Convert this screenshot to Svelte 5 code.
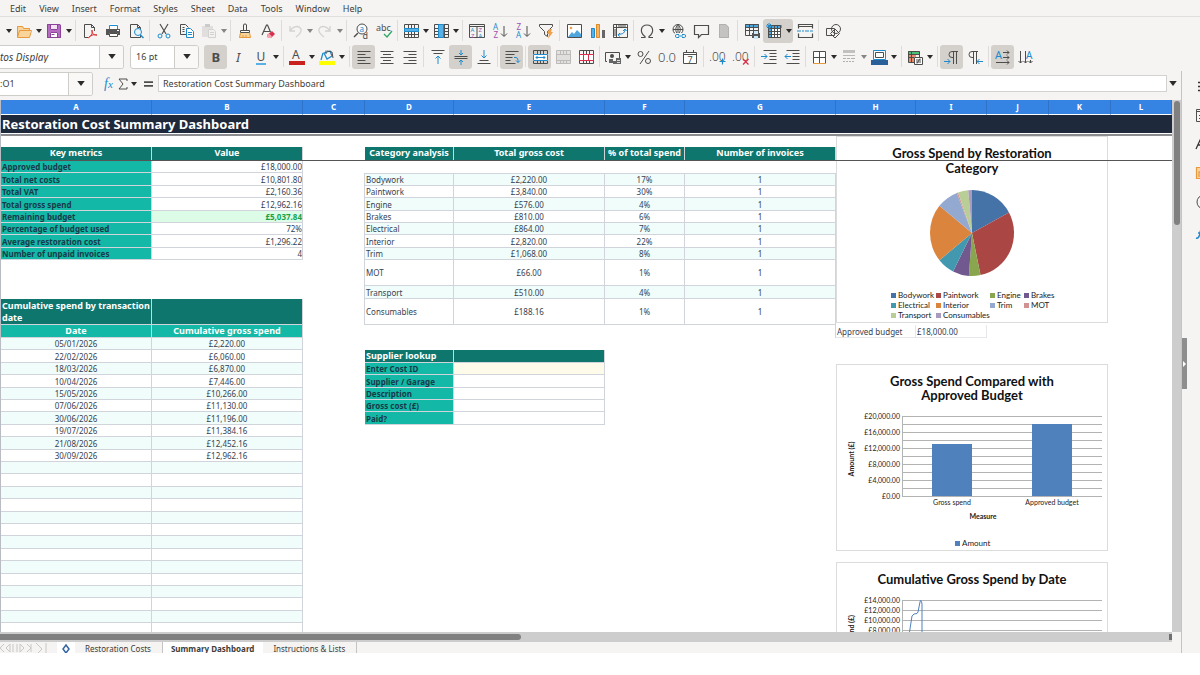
<script>
  const K = '#4d4d4b';
  const B = '#1e8bcd';
  const G = '#b9b8b6';
  const line = (d, c = K, w = 1) => `<path d="${d}" fill="none" stroke="${c}" stroke-width="${w}"/>`;
  const fill = (d, c) => `<path d="${d}" fill="${c}"/>`;
  const text = (x, y, s, c, size = 8, extra = '') =>
    `<text x="${x}" y="${y}" fill="${c}" font-size="${size}" font-family="Noto Sans, sans-serif" ${extra}>${s}</text>`;
  const grid = (c) => line('M1.5 1.500h14v13h-14zM1.5 5.5h14M1.5 8.5h14M1.5 11.5h14M5.5 1.500v13M8.5 1.500v13M11.5 1.500v13', c);
  const doc = (c) => line('M2.5 1.5h7l3 3v10h-10zM9.5 1.5v3h3', c);

  const icons = {
    folder: fill('M1 3h6l1 2h6v9H1z', '#fad59b') + line('M1.5 14V3.500h5l1 2h6V8M1.500 14.500l2-7h12l-2 7z', '#e79a3c'),
    save: fill('M1 1h13l1 1v13H1z', '#b46cc0') + fill('M4 1h8v6H4z', '#f3e3f5') + fill('M4 9h8v6H4z', '#fff') + line('M1.500 1.500h12l1 1v12h-13zM4.500 2v4.500h7V2M4.500 15V9.500h7V15M5.500 11.500h3', '#8c4299'),
    pdf: doc(K) + fill('M6 8h10v8H6z', '#f5f4f2') + line('M6 15c4-2 5-6 4-8-1 1 1 6 5 5-2-1-6 0-8 2', '#d33'),
    print: fill('M4 1h9v5H4z', '#fff') + line('M4.500 6V2.500h8V6', B) + fill('M1 6h14v6H1z', '#555') + fill('M4 10h9v4H4z', '#fff') + line('M4.500 10.500h8v3h-8z', K) + fill('M12 7h2v1h-2z', '#fff'),
    preview: doc(K) + `<circle cx="10" cy="9" r="3.500" fill="#e8f4fb" stroke="${B}"/>` + line('M12.500 12l3 3', B, 1.500),
    cut: line('M4 1l6 10M12 1L6 11', K, 1.200) + `<circle cx="4" cy="13" r="2" fill="none" stroke="${B}"/><circle cx="12" cy="13" r="2" fill="none" stroke="${B}"/>`,
    copy: line('M7 11.500H1.500v-10h5l3 3M3.500 4.500h2M3.500 6.500h2M3.500 8.500h2', K) + fill('M7 5h5l3 3v7H7z', '#fff') + line('M7.500 5.500h4l3 3v6h-7zM9 9.500h4M9 11.500h4', B),
    paste: fill('M1 3h11v11H1z', '#d0cfcd') + fill('M4 1h5v3H4z', '#aaa') + fill('M7 6h6l2 2v8H7z', '#efefed') + line('M7.500 6.500h5l2 2v6h-7zM9 9.500h4M9 11.500h4', G),
    brush: line('M6.500 7V2q0-1 1.500-1T9.500 2v5', K) + fill('M3 7h10v3H3z', '#fff') + line('M3.500 7.500h9v2h-9z', K) + fill('M3 10h10l1 5H2z', '#fad59b') + line('M3.500 10l-1 4.500h11l-1-4.500M6 14v-2M9 14v-2', '#e79a3c'),
    clear: line('M2 12L6.500 2h1l3 7M4 8.500h6', K, 1.200) + fill('M7 12l5-4 3 3-4 4H8z', '#d9304e') + fill('M7 12l2-1.500 3 3L11 15H8z', '#f5a3b0'),
    undo: line('M3 3v5h5M3 8c3-5 9-6 11-2 1 3-1 5-5 8', G, 1.300),
    redo: line('M13 3v5H8M13 8C10 3 4 2 2 6c-1 3 1 5 5 8', G, 1.300),
    find: `<circle cx="9" cy="6" r="5" fill="#f9fbfd" stroke="${K}"/>` + line('M5 10l-4 4', K, 1.500) + text(6.500, 8.500, 'a', B, 8) + text(9.500, 15.500, 'd', K, 9),
    spell: text(0, 8, 'abc', K, 9) + line('M8 11l3 3 5-6', '#2fa866', 1.300),
    row: grid(K) + fill('M1 5h15v4H1z', '#58b1e6') + line('M1.500 5.500h14v3h-14z', B),
    col: grid(K) + fill('M6 1h5v14H6z', '#58b1e6') + line('M5.500 1.500h5v13h-5z', B),
    sort: line('M.5 1.500h15v13H.5zM.5 3.500h15M8 4v10', K) + text(1.500, 9, 'A', B, 6) + text(2, 14.500, 'Z', '#a04fae', 6) + text(9.500, 9, 'Z', '#a04fae', 6) + text(9.500, 14.500, 'A', B, 6),
    asc: text(1, 7, 'A', B, 8) + text(1.500, 15, 'Z', '#a04fae', 8) + line('M12 3v10M9 10.500l3 3 3-3', K),
    desc: text(1.500, 7, 'Z', '#a04fae', 8) + text(1, 15, 'A', B, 8) + line('M12 3v10M9 10.500l3 3 3-3', K),
    filter: line('M1.500 1.500h13v2l-5 5v5l-3-2v-3l-5-5z', K) + fill('M11 6h3l-1 3h2l-5 7 1-5H9z', '#f0a04b'),
    image: fill('M2 2h13v12H2z', '#fff') + line('M1.500 1.500h14v13h-14z', K) + `<circle cx="5" cy="5" r="1.300" fill="#f0a04b"/>` + fill('M2 14l4-5 2 2 3-4 4 4v3z', '#4fa6dc'),
    chart: fill('M2 5h3v10H2z', '#58b1e6') + fill('M7 1h4v14H7z', '#f3b566') + fill('M13 7h3v8h-3z', '#666') + line('M2.500 5.500h3v9h-3z', B) + line('M7.500 1.500h3v13h-3z', '#e08a26'),
    pivot: line('M1.500 1.500h14v13h-14zM1.500 4.500h14M4.500 1.500v13M6 3h8M3 6v7', K) + line('M6 12c0-2 6 1 7-5M11 8l2-2 1.500 2M8 10l-2 2 2 1.500', B),
    omega: line('M2 14.500h4v-1C0 9 2 2 8 2s8 7 2 11.500v1h4', K, 1.200),
    link: `<circle cx="8" cy="6.500" r="5" fill="none" stroke="${K}"/>` + line('M3 6.500h10M8 1.500v10M8 1.500c-3 3-3 7 0 10M8 1.500c3 3 3 7 0 10', K) + fill('M5 10h12v6H5z', '#f5f4f2') + line('M9 11.500H6.500q-1 0-1 1.500t1 1.500H9M12 11.500h2.500q1 0 1 1.500t-1 1.500H12M8 13h5', B),
    comment: line('M1.500 2.500h14v9h-7l-3 3v-3h-4z', K, 1.200),
    field: fill('M3 1h7l3 3v11H3z', '#c4c3c1') + line('M3.500 1.500h6l3 3v10h-9z', '#b2b1af'),
    prange: fill('M1 1h14v4H1z', '#4fa6dc') + line('M1.500 1.500h13v11h-13zM1.500 4.500h13M1.500 7.500h13M5.500 1.500v11M9.500 1.500v11', K) + fill('M8 10h8v5H8z', '#555') + fill('M10 8h4v3h-4zM10 13h4v3h-4z', '#cfe8f7'),
    freeze: fill('M5 5h10v10H5z', '#fff') + fill('M2 2h14v3H2zM2 5h3v10H2z', '#4fa6dc') + line('M2.500 2.500h12v12h-12zM2.500 5.500h12M2.500 8.500h12M2.500 11.500h12M5.500 2.500v12M8.500 2.500v12M11.500 2.500v12', K) + line('M0 3h6M3 0v6M1 1l4 4M5 1L1 5', B),
    split: line('M1.500 5.500v-4h14v4M1.500 10.500v4h14v-4M1.500 3.500h14', K, 1.200) + line('M0 8h4M5 8h2M8 8h4M13 8h3', B),
    shapes: line('M1.500 5.500h8v7h-8z', K) + `<circle cx="11" cy="6" r="4.500" fill="none" stroke="${K}"/>` + line('M10 6l4.500 4.500L10 15l-4.500-4.500z', K),
    bold: text(3.500, 13, 'B', K, 13, 'font-weight="700"'),
    italic: text(5, 13, 'I', K, 13, 'font-style="italic"'),
    underline: text(3.500, 12, 'U', K, 12) + fill('M3 14h10v2H3z', '#58b1e6'),
    fcolor: text(3, 10, 'A', K, 12) + fill('M0 12h16v4H0z', '#c9211e'),
    hilite: line('M5 4l6-2 2 5-5 3zM4 4L2 11', B, 1.300) + line('M7 5V1.500M8 2l5 1 1 6', K) + fill('M0 12h16v4H0z', '#ff0'),
    left: line('M1.500 2.500h13M1.500 5.500h8M1.500 8.500h13M1.500 11.500h8M1.500 14.500h13'),
    center: line('M1.500 2.500h13M4 5.500h8M1.500 8.500h13M4 11.500h8M1.500 14.500h13'),
    right: line('M1.500 2.500h13M6.500 5.500h8M1.500 8.500h13M6.500 11.500h8M1.500 14.500h13'),
    top: line('M1.500 1.500h13M3.500 4.500h9') + line('M8 15V7M5.500 9.500L8 7l2.500 2.500', B),
    middle: line('M1.500 7.500h13M1.500 9.500h13') + line('M8 1v5M6 4l2 2 2-2M8 16v-5M6 13l2-2 2 2', B),
    bottom: line('M3.500 11.500h9M1.500 14.500h13') + line('M8 1v8M5.500 6.500L8 9l2.500-2.500', B),
    wrap: line('M1.500 2.500h13M1.500 5.500h9M1.500 8.500h7M1.500 11.500h5M1.500 14.500h10') + line('M10 8.500h2q2 0 2 3v2M12 11.500l2 2 2-2', B),
    merge: grid(K) + fill('M1 5h15v7H1z', '#fff') + line('M1.500 5.500h14v6h-14zM4 8.500h9M5.500 7L4 8.500 5.500 10M11.500 7L13 8.500 11.500 10', B),
    mcells: fill('M1 2h15v13H1z', '#d4d3d1') + grid('#8f8e8c') + fill('M2 6h13v5H2z', '#cfcecc'),
    split2: grid(K) + fill('M2 6h13v5H2z', '#fff') + line('M1.500 5.500h14v6h-14zM5.500 5.500v6M10.500 5.500v6', '#d9304e'),
    money: line('M2 12.500H.5v-9h14V9') + `<circle cx="7" cy="7" r="2" fill="${K}"/>` + fill('M4 10h4v4H4zM8 12h4v3H8zM11 9h5v6h-5z', '#666') + line('M12 11.500h3M12 13.500h3', '#ddd'),
    percent: `<circle cx="4.500" cy="5" r="2.500" fill="none" stroke="${K}"/><circle cx="12" cy="12" r="2.500" fill="none" stroke="${K}"/>` + line('M13 2L4 15'),
    number: text(-1, 13, '0.0', K, 13, 'font-weight="300"'),
    date: fill('M1 3h14v12H1z', '#fff') + line('M1.500 3.500h13v11h-13zM1.500 5.500h13M4.500 1v3M11.500 1v3', K) + text(5.500, 14, '7', K, 9),
    addDec: text(-1, 12, '.00', K, 12, 'font-weight="300"') + line('M12.500 9.500v6M9.500 12.500h6', B, 1.200),
    delDec: text(-1, 12, '.00', K, 12, 'font-weight="300"') + line('M10 10l5.500 5.500M15.500 10L10 15.500', '#d9304e', 1.300),
    indent: line('M2.500 1.500h13M8.500 4.500h7M8.500 7.500h7M8.500 10.500h7M2.500 14.500h13') + line('M0 7.500h6M3.500 5L6 7.500 3.500 10', B),
    outdent: line('M2.500 1.500h13M8.500 4.500h7M8.500 7.500h7M8.500 10.500h7M2.500 14.500h13') + line('M7 7.500H1M3.500 5L1 7.500 3.500 10', B),
    borders: fill('M2 2h12v12H2z', '#fff') + line('M2.500 14V2.500h12V14M8.500 2.500v12M2.500 8.500h12') + line('M2 14.500h13', '#e79a3c'),
    lstyle: fill('M2 1h12v3H2z', '#999') + line('M2 6.500h12', '#888') + line('M2 9.500h3M6 9.500h3M10 9.500h4M2 12.500h2M5 12.500h2M8 12.500h2M11 12.500h2', '#777'),
    bcolor: fill('M3 2h11v9H3z', '#fff') + line('M2.500 1.500h12v9h-12z', B) + line('M4.500 3.500h8v5h-8z', K) + fill('M0 11h17v5H0z', '#2a6099'),
    cond: fill('M1 2h12v3H1z', '#4bbf73') + fill('M1 6h8v7H1z', '#e98b6d') + line('M1.500 2.500h11v11h-11zM1.500 5.500h11M1.500 8.500h11M4.500 2.500v11', K) + fill('M7 8h9v8H7z', '#fff') + line('M7.500 8.500h8v7h-8zM9 11h5M9 13h5M13 9.500l-3 5', K),
    ltr: line('M14 2.500H8q-3 0-3 3t3 3h1M9.500 2v13M12.500 2v13') + line('M0 12.500h6M3.500 10L6 12.500 3.500 15', B),
    rtl: line('M11 2.500H5q-3 0-3 3t3 3h1M6.500 2v13M9.500 2v13') + line('M16 12.500h-6M12.500 10L10 12.500l2.500 2.500', B),
    horiz: text(0, 9.500, 'A', B, 11) + line('M8 3.500h6M12 1.500l2 2-2 2M8 8.500h6M12 6.500l2 2-2 2M1 13.500h13M12 11.500l2 2-2 2'),
    vert: line('M2.500 2v12M.5 12l2 2 2-2M7.500 2v12M5.500 12l2 2 2-2M12.500 11v3M10.500 12l2 2 2-2') + text(8, 10, 'A', B, 10),
    menu: line('M2 4.500h12M2 8.500h12M2 12.500h12', '#333', 1.500),
    props: line('M.5 2.500h14v12H.5zM.5 4.500h14M3 8.500h8M3 11.500h8'),
    styles: line('M0 13L5.500 1l5 12M2 9h7', '#333', 1.300),
    gallery: fill('M0 3h15v11H0z', '#fad59b') + line('M.5 2.500h14v11H.5zM3 12V7l4-2', '#e79a3c', 1.200),
    navigator: `<circle cx="8" cy="8" r="7" fill="none" stroke="${K}"/>` + line('M5 10l4-5', K),
    func: line('M0 15q3 1 4-5t4-5M2 10h5', B, 1.500)
  };

  // "|" is a separator; [name, label, options]: d = has a drop-down, a = pressed, x = unavailable
  const standardBar = [
    ['folder', 'Open', 'd'], ['save', 'Save', 'd'], '|',
    ['pdf', 'Export as PDF', ''], ['print', 'Print', ''], ['preview', 'Print Preview', ''], '|',
    ['cut', 'Cut', ''], ['copy', 'Copy', ''], ['paste', 'Paste', 'dx'], '|',
    ['brush', 'Clone Formatting', ''], ['clear', 'Clear Formatting', ''], '|',
    ['undo', 'Undo', 'dx'], ['redo', 'Redo', 'dx'], '|',
    ['find', 'Find and Replace', ''], ['spell', 'Spelling', ''], '|',
    ['row', 'Row', 'd'], ['col', 'Column', 'd'], '|',
    ['sort', 'Sort', ''], ['asc', 'Sort Ascending', ''], ['desc', 'Sort Descending', ''], ['filter', 'AutoFilter', ''], '|',
    ['image', 'Insert Image', ''], ['chart', 'Insert Chart', ''], ['pivot', 'Pivot Table', ''], '|',
    ['omega', 'Special Character', 'd'], ['link', 'Hyperlink', ''], ['comment', 'Comment', ''], ['field', 'Headers and Footers', ''], '|',
    ['prange', 'Define Print Area', ''], ['freeze', 'Freeze Rows and Columns', 'da'], ['split', 'Split Window', ''], '|',
    ['shapes', 'Show Draw Functions', '']
  ];
  const formatBar = [
    ['bold', 'Bold', 'a'], ['italic', 'Italic', ''], ['underline', 'Underline', 'd'], '|',
    ['fcolor', 'Font Color', 'd'], ['hilite', 'Background Color', 'd'], '|',
    ['left', 'Align Left', 'a'], ['center', 'Align Center', ''], ['right', 'Align Right', ''], '|',
    ['top', 'Align Top', ''], ['middle', 'Center Vertically', 'a'], ['bottom', 'Align Bottom', ''], '|',
    ['wrap', 'Wrap Text', 'a'], '|',
    ['merge', 'Merge and Center', 'a'], ['mcells', 'Merge Cells', 'x'], ['split2', 'Unmerge Cells', ''], '|',
    ['money', 'Currency', 'd'], ['percent', 'Percent', ''], ['number', 'Number', ''], ['date', 'Date', ''], '|',
    ['addDec', 'Add Decimal Place', ''], ['delDec', 'Delete Decimal Place', ''], '|',
    ['indent', 'Increase Indent', ''], ['outdent', 'Decrease Indent', ''], '|',
    ['borders', 'Borders', 'd'], ['lstyle', 'Border Style', 'dx'], ['bcolor', 'Border Color', 'd'], '|',
    ['cond', 'Conditional Formatting', 'd'], '|',
    ['ltr', 'Left-To-Right', 'a'], ['rtl', 'Right-To-Left', ''], '|',
    ['horiz', 'Text Horizontal', 'a'], ['vert', 'Text Vertical', '']
  ];
  const sideBar = [['menu', 'Sidebar Settings'], ['props', 'Properties'], ['styles', 'Styles'], ['gallery', 'Gallery'], ['navigator', 'Navigator'], ['func', 'Functions']];
  const menus = ['Edit', 'View', 'Insert', 'Format', 'Styles', 'Sheet', 'Data', 'Tools', 'Window', 'Help'];

  const cols = 'ABCDEFGHIJKL'.split('');
  const metrics = [
    ['Approved budget', '£18,000.00'], ['Total net costs', '£10,801.80'], ['Total VAT', '£2,160.36'],
    ['Total gross spend', '£12,962.16'], ['Remaining budget', '£5,037.84'], ['Percentage of budget used', '72%'],
    ['Average restoration cost', '£1,296.22'], ['Number of unpaid invoices', '4']
  ];
  const categories = [
    ['Bodywork', '£2,220.00', '17%', 2220, '#4572a7'], ['Paintwork', '£3,840.00', '30%', 3840, '#aa4643'],
    ['Engine', '£576.00', '4%', 576, '#89a54e'], ['Brakes', '£810.00', '6%', 810, '#71588f'],
    ['Electrical', '£864.00', '7%', 864, '#4198af'], ['Interior', '£2,820.00', '22%', 2820, '#db843d'],
    ['Trim', '£1,068.00', '8%', 1068, '#93a9cf'], ['MOT', '£66.00', '1%', 66, '#d19392'],
    ['Transport', '£510.00', '4%', 510, '#b9cd96'], ['Consumables', '£188.16', '1%', 188.16, '#a99bbd']
  ];
  const running = [
    ['05/01/2026', '£2,220.00'], ['22/02/2026', '£6,060.00'], ['18/03/2026', '£6,870.00'], ['10/04/2026', '£7,446.00'],
    ['15/05/2026', '£10,266.00'], ['07/06/2026', '£11,130.00'], ['30/06/2026', '£11,196.00'], ['19/07/2026', '£11,384.16'],
    ['21/08/2026', '£12,452.16'], ['30/09/2026', '£12,962.16']
  ];
  const lookup = ['Enter Cost ID', 'Supplier / Garage', 'Description', 'Gross cost (£)', 'Paid?'];

  const size = (i) => (i % 5 === 1 || i % 5 === 3 ? 'r13' : 'r12');
  const catCells = (i) => {
    const tone = (i % 2 === 0 ? ' alt' : '') + (i === 0 ? ' top' : '');
    const [name, cost, share] = categories[i];
    return { D: [name, 'cell start' + tone], E: [cost, 'cell mid' + tone], F: [share, 'cell mid' + tone], G: ['1', 'cell mid' + tone] };
  };

  const rows = [];
  metrics.forEach(([label, value], i) => {
    rows.push({
      size: size(i),
      cells: {
        A: [label, 'cell label'],
        B: [value, i === 4 ? 'cell end good' : 'cell end'],
        ...(i > 0 ? catCells(i - 1) : {})
      }
    });
  });
  rows.push({ size: 'r26', cells: catCells(7) });
  rows.push({ size: 'r13', cells: catCells(8) });
  rows.push({ size: 'r26', cells: { A: ['Cumulative spend by transaction date', 'cell head text'], B: ['', 'cell head'], ...catCells(9) } });
  rows.push({
    size: 'r13',
    cells: {
      A: ['Date', 'cell sub'], B: ['Cumulative gross spend', 'cell sub'],
      H: ['Approved budget', 'cell faint start'], I: ['£18,000.00', 'cell faint']
    }
  });
  for (let i = 0; i < 26; i++) {
    const tone = i % 2 === 0 ? ' alt' : '';
    const [d, v] = running[i] ?? ['', ''];
    const cells = { A: [d, 'cell mid' + tone], B: [v, 'cell mid' + tone] };
    if (i === 1) {
      cells.D = ['Supplier lookup', 'cell head text'];
      cells.E = ['', 'cell head'];
    } else if (i > 1 && i < 7) {
      cells.D = [lookup[i - 2], 'cell label'];
      cells.E = ['', i === 2 ? 'cell entry' : 'cell'];
    }
    rows.push({ size: size(i), cells });
  }

  const total = categories.reduce((s, c) => s + c[3], 0);
  let turned = 0;
  const slices = categories.map((c) => {
    const p = (f) => `${136 + 42 * Math.sin(f * 2 * Math.PI)} ${97 - 43 * Math.cos(f * 2 * Math.PI)}`;
    const from = turned / total;
    turned += c[3];
    const to = turned / total;
    return { d: `M136 97L${p(from)}A42 43 0 0 1 ${p(to)}Z`, color: c[4] };
  });
  const legendX = [55, 100, 154, 188];
  const legend = categories.map((c, i) => ({ name: c[0], color: c[4], x: legendX[i % 4], y: 159 + 10 * Math.floor(i / 4) }));
  const budgetTicks = ['£20,000.00', '£16,000.00', '£12,000.00', '£8,000.00', '£4,000.00', '£0.00'];
  const dateTicks = ['£14,000.00', '£12,000.00', '£10,000.00', '£8,000.00'];
</script>

{#snippet caret()}
  <svg class="caret" viewBox="0 0 6 4" aria-hidden="true"><path d="M0 0h6L3 4z" /></svg>
{/snippet}

{#snippet bar(items)}
  {#each items as item}
    {#if item === '|'}
      <span class="sep"></span>
    {:else}
      {@const [name, label, opt] = item}
      <span class="tool" class:menu={opt.includes('d')} class:on={opt.includes('a')} class:off={opt.includes('x')}>
        <button class="icon" aria-label={label}>
          <svg viewBox="0 0 16 16">{@html icons[name]}</svg>
        </button>
        {#if opt.includes('d')}
          <button class="drop" aria-label="{label} options">{@render caret()}</button>
        {/if}
      </span>
    {/if}
  {/each}
{/snippet}

<div class="app">
  <nav class="menus">
    {#each menus as m}<button>{m}</button>{/each}
  </nav>

  <div class="toolbar">
    <button class="drop" aria-label="New options">{@render caret()}</button>
    {@render bar(standardBar)}
  </div>

  <div class="toolbar format">
    <div class="combo font">
      <input aria-label="Font name" value="tos Display" />
      <button aria-label="Font list">{@render caret()}</button>
    </div>
    <div class="combo points">
      <input aria-label="Font size" value="16 pt" />
      <button aria-label="Size list">{@render caret()}</button>
    </div>
    {@render bar(formatBar)}
  </div>

  <div class="work">
    <main>
      <div class="formula">
        <div class="combo name">
          <input aria-label="Name box" value=":O1" />
          <button aria-label="Named ranges">{@render caret()}</button>
        </div>
        <button class="fx" aria-label="Function wizard"><i>f</i><i class="x">x</i></button>
        <button class="sum" aria-label="Sum">
          <svg viewBox="0 0 10 12"><path d="M9 3V1H1l4 5-4 5h8V9" fill="none" stroke="#4d4d4b" /></svg>
        </button>
        <button class="drop" aria-label="Sum options">{@render caret()}</button>
        <button class="equals" aria-label="Formula">
          <svg viewBox="0 0 10 6"><path d="M0 1h10M0 5h10" stroke="#4d4d4b" stroke-width="2" /></svg>
        </button>
        <input class="line" aria-label="Input line" value="Restoration Cost Summary Dashboard" />
        <button class="expand" aria-label="Expand formula bar">{@render caret()}</button>
      </div>

      <div class="pane">
        <div class="sheet">
          <table>
            <colgroup>
              {#each cols as c}<col class="c{c}" />{/each}
            </colgroup>
            <thead>
              <tr class="letters">
                {#each cols as c}<th>{c}</th>{/each}
              </tr>
            </thead>
            <tbody>
              <tr class="title"><td colspan="12">Restoration Cost Summary Dashboard</td></tr>
              <tr class="gap"><td colspan="12"></td></tr>
              <tr class="heads">
                <th>Key metrics</th><th>Value</th><td></td>
                <th>Category analysis</th><th>Total gross cost</th><th>% of total spend</th><th>Number of invoices</th>
                <td colspan="5"></td>
              </tr>
              {#each rows as row}
                <tr class={row.size}>
                  {#each cols as c}
                    {@const cell = row.cells[c]}
                    <td class={cell ? cell[1] : ''}>{cell ? cell[0] : ''}</td>
                  {/each}
                </tr>
              {/each}
            </tbody>
          </table>

          <svg class="graph g1" viewBox="0 0 272 187" role="img" aria-label="Gross Spend by Restoration Category">
            <rect class="frame" x="0.5" y="0.5" width="271" height="186" />
            <text class="t" x="136" y="22">Gross Spend by Restoration</text>
            <text class="t" x="136" y="37">Category</text>
            {#each slices as s}<path d={s.d} fill={s.color} />{/each}
            {#each legend as l}
              <rect x={l.x} y={l.y - 2} width="5" height="5" fill={l.color} />
              <text x={l.x + 7} y={l.y + 3}>{l.name}</text>
            {/each}
          </svg>

          <svg class="graph g2" viewBox="0 0 272 187" role="img" aria-label="Gross Spend Compared with Approved Budget">
            <rect class="frame" x="0.5" y="0.5" width="271" height="186" />
            <text class="t" x="136" y="22">Gross Spend Compared with</text>
            <text class="t" x="136" y="36">Approved Budget</text>
            {#each { length: 11 } as _, i}<path class="rule" d="M66 {52.5 + i * 8}h200" />{/each}
            <path class="rule" d="M66.500 52v81" />
            {#each budgetTicks as t, i}<text class="tick" x="64" y={55 + i * 16}>{t}</text>{/each}
            <rect x="96" y="80" width="40" height="52" fill="#4f81bd" />
            <rect x="196" y="60" width="40" height="72" fill="#4f81bd" />
            <text class="c" x="116" y="141">Gross spend</text>
            <text class="c" x="216" y="141">Approved budget</text>
            <text class="c b" x="147" y="155">Measure</text>
            <text class="c b" transform="translate(18 95) rotate(-90)">Amount (£)</text>
            <rect x="119" y="177" width="5" height="5" fill="#4f81bd" />
            <text x="126" y="182">Amount</text>
          </svg>

          <svg class="graph g3" viewBox="0 0 272 187" role="img" aria-label="Cumulative Gross Spend by Date">
            <rect class="frame" x="0.5" y="0.5" width="271" height="186" />
            <text class="t" x="136" y="22">Cumulative Gross Spend by Date</text>
            {#each dateTicks as t, i}
              <path class="rule" d="M66 {38.5 + i * 10}h200" />
              <text class="tick" x="64" y={41 + i * 10}>{t}</text>
            {/each}
            <path class="rule" d="M66.500 38v149" />
            <path d="M72 80L76 54L78 52Q82 52 82 50L84 40Q85 36 86 42L86 80" fill="none" stroke="#4f81bd" />
            <text class="tick b" transform="translate(18 53) rotate(-90)">Cumulative spend (£)</text>
          </svg>

          <div class="freeze"></div>
        </div>
        <div class="vscroll"><span></span></div>
      </div>

      <div class="hscroll"><span></span><i></i></div>

      <footer>
        <span class="nav" aria-hidden="true">
          <svg viewBox="0 0 48 12"><path d="M4 2L0 6l4 4M10 2L6 6l4 4zM13 2v8M17 2v8M20 2l4 4-4 4zM27 2l4 4-4 4M31 2v8M36 1l6 6-4 4M46 1v11" /></svg>
        </span>
        <button class="add" aria-label="Add sheet">
          <svg viewBox="0 0 8 12"><path d="M4 2l3 4-3 4-3-4z" fill="none" stroke="#3465a4" stroke-width="1.500" /></svg>
        </button>
        <button class="tab">Restoration Costs</button>
        <button class="tab current">Summary Dashboard</button>
        <button class="tab last">Instructions &amp; Lists</button>
      </footer>
    </main>

    <aside>
      {#each sideBar as [name, label]}
        <button aria-label={label}><svg viewBox="0 0 16 16">{@html icons[name]}</svg></button>
      {/each}
      <span class="grip"><svg viewBox="0 0 3 6"><path d="M0 0l3 3-3 3z" fill="#fff" /></svg></span>
    </aside>
  </div>
</div>

<style>
  :global(body) {
    margin: 0;
    background: #fff;
  }
  .app {
    display: flex;
    flex-direction: column;
    height: calc(100vh - 22px);
    overflow: hidden;
    background: #f5f4f2;
    color: #3d3d3b;
    font: 9px/12px 'Noto Sans', sans-serif;
  }
  button,
  input {
    font: inherit;
    color: inherit;
    margin: 0;
    padding: 0;
    border: 0;
    background: none;
    min-width: 0;
    box-sizing: border-box;
  }
  svg {
    display: block;
    overflow: visible;
  }

  .menus {
    display: flex;
    align-items: flex-end;
    gap: 13px;
    height: 16px;
    padding-left: 10px;
    border-bottom: 1px solid #dfdedc;
    flex: none;
  }
  .menus button {
    height: 14px;
  }
  .toolbar {
    display: flex;
    align-items: center;
    height: 27px;
    padding-left: 5px;
    box-sizing: border-box;
    flex: none;
  }
  .toolbar.format {
    padding: 0 0 2px;
  }
  .tool {
    display: flex;
    border-radius: 3px;
  }
  .on {
    background: #d4d1cd;
  }
  .off {
    opacity: 0.55;
  }
  .icon {
    display: grid;
    place-items: center;
    width: 23px;
    height: 24px;
  }
  .menu .icon {
    width: 22px;
  }
  .icon svg {
    width: 16px;
    height: 16px;
  }
  .drop {
    display: grid;
    place-items: center;
    width: 8px;
    height: 24px;
  }
  .caret {
    width: 6px;
    height: 4px;
    fill: #2b2b2a;
  }
  .sep {
    width: 5px;
    height: 21px;
    background: linear-gradient(#dddcda, #dddcda) center / 1px 100% no-repeat;
  }
  .format .menu + .sep {
    width: 6px;
  }
  .combo {
    display: flex;
    height: 24px;
    box-sizing: border-box;
    border: 1px solid #cfcdca;
    border-radius: 3px;
    background: #fff;
    overflow: hidden;
  }
  .combo input {
    flex: 1;
  }
  .combo button {
    display: grid;
    place-items: center;
    width: 24px;
    border-left: 1px solid #cfcdca;
    background: #f9f8f7;
  }
  .combo .caret {
    width: 8px;
    height: 5px;
  }
  .font,
  .name {
    border-left: 0;
    border-radius: 0 3px 3px 0;
  }
  .font {
    width: 124px;
    margin-right: 6px;
    font-size: 10px;
    font-style: italic;
  }
  .points {
    width: 69px;
    margin-right: 5px;
  }
  .points input {
    padding-left: 5px;
  }

  .work {
    display: flex;
    flex: 1;
    min-height: 0;
  }
  main {
    display: flex;
    flex-direction: column;
    flex: 1;
    min-width: 0;
    border-right: 1px solid #c4c4c4;
  }
  .formula {
    display: flex;
    align-items: center;
    height: 25px;
    padding-bottom: 4px;
    flex: none;
  }
  .name {
    width: 93px;
    margin-right: 8px;
  }
  .fx {
    width: 15px;
    color: #1e8bcd;
    font: 14px/16px 'Liberation Serif', serif;
  }
  .fx .x {
    font-size: 11px;
  }
  .sum {
    width: 14px;
  }
  .sum svg {
    width: 10px;
    height: 12px;
    margin: 0 auto;
  }
  .equals {
    width: 20px;
  }
  .equals svg {
    width: 9px;
    height: 6px;
    margin: 0 auto;
  }
  .line {
    flex: 1;
    height: 17px;
    padding: 0 4px;
    border: 1px solid #d3d2d0;
    background: #fff;
  }
  .expand {
    display: grid;
    place-items: center;
    width: 12px;
    margin-right: 2px;
  }
  .expand .caret {
    width: 8px;
    height: 5px;
  }

  .pane {
    display: flex;
    flex: 1;
    min-height: 0;
  }
  .sheet {
    position: relative;
    flex: 1;
    overflow: hidden;
    background: #fff;
    border-left: 1px solid #b9bcc2;
  }
  table {
    width: 100%;
    table-layout: fixed;
    border-collapse: separate;
    border-spacing: 0;
    font-size: 8px;
    line-height: 11px;
    color: #374151;
  }
  .cA, .cB, .cE, .cG {
    width: 151px;
  }
  .cC, .cJ, .cK {
    width: 62px;
  }
  .cD {
    width: 89px;
  }
  .cF, .cH {
    width: 80px;
  }
  .cI {
    width: 71px;
  }
  td,
  th {
    padding: 0 1px;
    overflow: hidden;
    box-sizing: border-box;
    vertical-align: middle;
  }
  .letters th {
    height: 15px;
    padding-bottom: 1px;
    background: #3584e4;
    border-right: 1px solid #2f74c9;
    border-bottom: 1px solid #fff;
    color: #fff;
    line-height: 12px;
  }
  .title td {
    height: 18px;
    background: #1e293b;
    color: #fff;
    font-size: 13px;
    line-height: 18px;
    font-weight: 700;
  }
  .gap td {
    height: 14px;
    background: linear-gradient(#8a8c90, #8a8c90) 0 1px / 100% 2px no-repeat;
  }
  .heads th,
  .heads td {
    height: 14px;
  }
  .heads th {
    padding-bottom: 2px;
    background: #0f766e;
    border-right: 1px solid #d1d5db;
    color: #fff;
    font-size: 9px;
    line-height: 12px;
    white-space: nowrap;
  }
  .r12 td {
    height: 12px;
  }
  .r13 td {
    height: 13px;
  }
  .r26 td {
    height: 26px;
  }
  .cell {
    border-right: 1px solid #d1d5db;
    border-bottom: 1px solid #d1d5db;
    white-space: nowrap;
  }
  .start {
    box-shadow: -1px 0 #d1d5db;
  }
  .top {
    border-top: 1px solid #d1d5db;
    line-height: 10px;
  }
  .mid {
    text-align: center;
  }
  .end {
    text-align: right;
    padding-right: 0;
  }
  .alt {
    background: #f0fdfa;
  }
  .label {
    background: #14b8a6;
    color: #173a4a;
    font-weight: 700;
  }
  .good {
    background: #dcfce7;
    color: #16a34a;
    font-weight: 700;
  }
  .head {
    background: #0f766e;
  }
  .text {
    color: #fff;
    font-size: 9px;
    line-height: 12px;
    font-weight: 700;
    white-space: normal;
  }
  .sub {
    background: #14b8a6;
    color: #fff;
    font-size: 9px;
    line-height: 12px;
    font-weight: 700;
    text-align: center;
  }
  .entry {
    background: #fffbeb;
  }
  .faint {
    border-color: #e5e7eb;
  }

  .graph {
    position: absolute;
    left: 835px;
    width: 272px;
    height: 187px;
    font: 8px Lato, sans-serif;
    fill: #222;
  }
  .g1 {
    top: 36px;
  }
  .g2 {
    top: 264px;
  }
  .g3 {
    top: 462px;
  }
  .frame {
    fill: #fff;
    stroke: #dcdcdc;
  }
  .t {
    font-size: 13px;
    font-weight: 700;
    text-anchor: middle;
    fill: #111;
  }
  .tick {
    text-anchor: end;
    font-size: 7px;
  }
  .c {
    text-anchor: middle;
    font-size: 7px;
  }
  .b {
    font-weight: 700;
  }
  .rule {
    stroke: #b3b3b3;
    fill: none;
  }
  .freeze {
    position: absolute;
    left: 0;
    right: 0;
    top: 60px;
    height: 1px;
    background: #555;
  }
  .vscroll {
    width: 9px;
    padding: 1px 1px 0 2px;
    box-sizing: border-box;
    background: #cdcdcd;
  }
  .vscroll span {
    display: block;
    height: 124px;
    border-radius: 3px;
    background: #808080;
  }
  .hscroll {
    display: flex;
    justify-content: space-between;
    height: 6px;
    padding: 2px 0;
    margin-right: 9px;
    background: #cdcdcd;
    flex: none;
  }
  .hscroll span {
    width: 521px;
    border-radius: 0 3px 3px 0;
    background: #808080;
  }
  .hscroll i {
    width: 3px;
    background: #707070;
  }

  footer {
    display: flex;
    height: 11px;
    overflow: hidden;
    font-size: 8px;
    line-height: 14px;
    flex: none;
  }
  .nav {
    width: 57px;
  }
  .nav svg {
    width: 48px;
    height: 12px;
    fill: none;
    stroke: #c9c8c6;
  }
  .add {
    width: 18px;
    background: #fff;
  }
  .add svg {
    width: 8px;
    height: 12px;
    margin: 1px auto 0;
  }
  .tab {
    height: 14px;
    padding: 0 11px 0 10px;
    white-space: nowrap;
    border-right: 1px solid #c4c3c1;
  }
  .current {
    padding: 0 8px;
    background: #fff;
    font-weight: 700;
    border-color: #fff;
  }

  aside {
    position: relative;
    width: 18px;
    overflow: hidden;
    flex: none;
  }
  aside button {
    display: block;
    height: 29px;
    padding-left: 14px;
  }
  aside svg {
    width: 16px;
    height: 16px;
  }
  .grip {
    position: absolute;
    left: 0;
    top: 267px;
    width: 5px;
    height: 51px;
    display: grid;
    place-items: center;
    background: #8e8e8e;
  }
  .grip svg {
    width: 3px;
    height: 6px;
  }
</style>
